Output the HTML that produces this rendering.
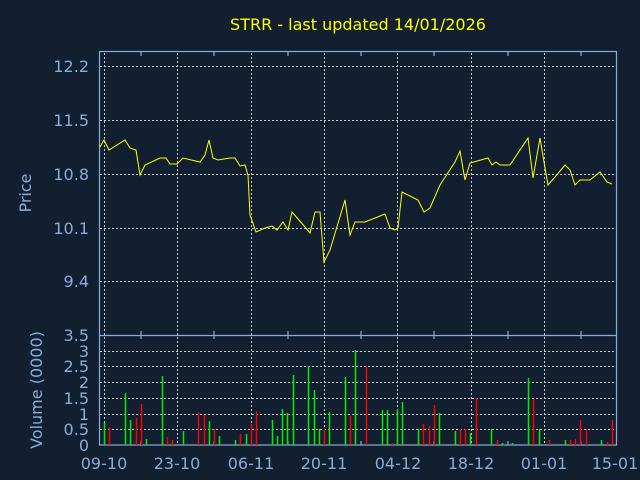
<!DOCTYPE html>
<html><head><style>
body{margin:0;background:#111f30;}
svg{display:block}
text{font-family:"DejaVu Sans",sans-serif;fill:#8aacd6}
</style></head><body>
<svg width="640" height="480" xmlns="http://www.w3.org/2000/svg">
<rect width="640" height="480" fill="#111f30"/>
<text x="358" y="30" text-anchor="middle" font-size="16" style="fill:#ffff00">STRR - last updated 14/01/2026</text>
<g stroke="#c8c8c8" stroke-dasharray="2,2" stroke-width="1">
<line x1="100" y1="66.5" x2="616" y2="66.5"/><line x1="100" y1="120.5" x2="616" y2="120.5"/>
<line x1="100" y1="174.5" x2="616" y2="174.5"/><line x1="100" y1="228.5" x2="616" y2="228.5"/>
<line x1="100" y1="281.5" x2="616" y2="281.5"/>
<line x1="100" y1="351.5" x2="616" y2="351.5"/><line x1="100" y1="366.5" x2="616" y2="366.5"/>
<line x1="100" y1="382.5" x2="616" y2="382.5"/><line x1="100" y1="398.5" x2="616" y2="398.5"/>
<line x1="100" y1="414.5" x2="616" y2="414.5"/><line x1="100" y1="429.5" x2="616" y2="429.5"/>
<g id="v"><line x1="104.5" y1="53" x2="104.5" y2="445"/><line x1="177.5" y1="53" x2="177.5" y2="445"/>
<line x1="251.5" y1="53" x2="251.5" y2="445"/><line x1="324.5" y1="53" x2="324.5" y2="445"/>
<line x1="397.5" y1="53" x2="397.5" y2="445"/><line x1="471.5" y1="53" x2="471.5" y2="445"/>
<line x1="544.5" y1="53" x2="544.5" y2="445"/></g>
</g>
<g stroke="#8aacd6" fill="none" stroke-width="1.2">
<rect x="99.5" y="51.5" width="517" height="393.5"/>
<line x1="99.5" y1="335.5" x2="616.5" y2="335.5"/>
<path d="M141 52v4M214 52v4M288 52v4M361 52v4M434 52v4M508 52v4M581 52v4M141 335v-4M214 335v-4M288 335v-4M361 335v-4M434 335v-4M508 335v-4M581 335v-4M141 335v4M214 335v4M288 335v4M361 335v4M434 335v4M508 335v4M581 335v4M141 445v-4M214 445v-4M288 445v-4M361 445v-4M434 445v-4M508 445v-4M581 445v-4"/>
</g>
<polyline fill="none" stroke="#ffff00" stroke-width="1" points="100,147 104,140 109,150 125,140 130,148 136,150 140,175 145,165 160,158 166,158 170,164 177,164 183,158 200,162 205,155 209,140 213,158 218,160 230,158 235,158 240,166 245,165 248,175 250,215 256,232 265,228 272,226 277,230 283,222 288,230 292,212 305,227 310,233 315,212 320,212 324,262 330,250 345,200 350,235 355,222 365,222 375,218 385,214 390,228 395,230 398,228 402,192 418,200 424,212 430,208 440,185 455,162 460,151 465,180 470,163 488,158 492,165 496,162 500,165 510,165 528,138 533,178 540,138 544,162 548,185 555,177 565,165 570,170 575,185 580,180 590,180 600,172 607,182 612,184"/>
<g stroke-width="1.5">
<g stroke="#00ee00">
<line x1="104.5" y1="445" x2="104.5" y2="423"/><line x1="125.5" y1="445" x2="125.5" y2="393"/>
<line x1="130.5" y1="445" x2="130.5" y2="420"/><line x1="146.5" y1="445" x2="146.5" y2="439"/>
<line x1="162.5" y1="445" x2="162.5" y2="376"/><line x1="183.5" y1="445" x2="183.5" y2="431"/>
<line x1="209.5" y1="445" x2="209.5" y2="421"/><line x1="219.5" y1="445" x2="219.5" y2="436"/>
<line x1="235.5" y1="445" x2="235.5" y2="440"/><line x1="246.5" y1="445" x2="246.5" y2="434"/>
<line x1="272.5" y1="445" x2="272.5" y2="420"/><line x1="277.5" y1="445" x2="277.5" y2="436"/>
<line x1="282.5" y1="445" x2="282.5" y2="409"/><line x1="287.5" y1="445" x2="287.5" y2="413"/>
<line x1="293.5" y1="445" x2="293.5" y2="375"/><line x1="308.5" y1="445" x2="308.5" y2="366"/>
<line x1="314.5" y1="445" x2="314.5" y2="390"/><line x1="319.5" y1="445" x2="319.5" y2="429"/>
<line x1="329.5" y1="445" x2="329.5" y2="412"/><line x1="345.5" y1="445" x2="345.5" y2="377"/>
<line x1="355.5" y1="445" x2="355.5" y2="350"/><line x1="382.5" y1="445" x2="382.5" y2="410"/>
<line x1="387.5" y1="445" x2="387.5" y2="410"/><line x1="397.5" y1="445" x2="397.5" y2="409"/>
<line x1="402.5" y1="445" x2="402.5" y2="402"/><line x1="418.5" y1="445" x2="418.5" y2="429"/>
<line x1="439.5" y1="445" x2="439.5" y2="413"/><line x1="455.5" y1="445" x2="455.5" y2="431"/>
<line x1="470.5" y1="445" x2="470.5" y2="433"/><line x1="491.5" y1="445" x2="491.5" y2="429"/>
<line x1="502.5" y1="445" x2="502.5" y2="443"/><line x1="512.5" y1="445" x2="512.5" y2="443"/>
<line x1="528.5" y1="445" x2="528.5" y2="378"/><line x1="539.5" y1="445" x2="539.5" y2="429"/>
<line x1="565.5" y1="445" x2="565.5" y2="440"/><line x1="601.5" y1="445" x2="601.5" y2="440"/>
</g>
<g stroke="#ff0000">
<line x1="109.5" y1="445" x2="109.5" y2="427"/><line x1="136.5" y1="445" x2="136.5" y2="418"/>
<line x1="141.5" y1="445" x2="141.5" y2="404"/><line x1="167.5" y1="445" x2="167.5" y2="437"/>
<line x1="172.5" y1="445" x2="172.5" y2="440"/><line x1="198.5" y1="445" x2="198.5" y2="412"/>
<line x1="204.5" y1="445" x2="204.5" y2="415"/><line x1="214.5" y1="445" x2="214.5" y2="429"/>
<line x1="240.5" y1="445" x2="240.5" y2="434"/><line x1="251.5" y1="445" x2="251.5" y2="424"/>
<line x1="256.5" y1="445" x2="256.5" y2="411"/><line x1="324.5" y1="445" x2="324.5" y2="429"/>
<line x1="350.5" y1="445" x2="350.5" y2="416"/><line x1="366.5" y1="445" x2="366.5" y2="366"/>
<line x1="392.5" y1="445" x2="392.5" y2="443"/><line x1="423.5" y1="445" x2="423.5" y2="424"/>
<line x1="429.5" y1="445" x2="429.5" y2="426"/><line x1="434.5" y1="445" x2="434.5" y2="405"/>
<line x1="460.5" y1="445" x2="460.5" y2="429"/><line x1="465.5" y1="445" x2="465.5" y2="429"/>
<line x1="476.5" y1="445" x2="476.5" y2="398"/><line x1="497.5" y1="445" x2="497.5" y2="440"/>
<line x1="533.5" y1="445" x2="533.5" y2="399"/><line x1="549.5" y1="445" x2="549.5" y2="440"/>
<line x1="570.5" y1="445" x2="570.5" y2="440"/><line x1="575.5" y1="445" x2="575.5" y2="439"/>
<line x1="580.5" y1="445" x2="580.5" y2="420"/><line x1="586.5" y1="445" x2="586.5" y2="429"/>
<line x1="607.5" y1="445" x2="607.5" y2="442"/><line x1="612.5" y1="445" x2="612.5" y2="420"/>
</g>
</g>
<g font-size="16" text-anchor="end">
<text x="89" y="72">12.2</text><text x="89" y="126">11.5</text><text x="89" y="180">10.8</text>
<text x="89" y="234">10.1</text><text x="89" y="287">9.4</text><text x="89" y="341">3.5</text>
<text x="89" y="357">3</text><text x="89" y="372">2.5</text><text x="89" y="388">2</text>
<text x="89" y="404">1.5</text><text x="89" y="420">1</text><text x="89" y="435">0.5</text>
<text x="89" y="451">0</text>
</g>
<g font-size="16" text-anchor="middle">
<text x="104" y="469">09-10</text><text x="177" y="469">23-10</text><text x="251" y="469">06-11</text>
<text x="324" y="469">20-11</text><text x="398" y="469">04-12</text><text x="471" y="469">18-12</text>
<text x="544" y="469">01-01</text><text x="615" y="469">15-01</text>
</g>
<text transform="translate(31,193) rotate(-90)" font-size="16" text-anchor="middle">Price</text>
<text transform="translate(42,390) rotate(-90)" font-size="16" text-anchor="middle">Volume (0000)</text>
</svg>
</body></html>
